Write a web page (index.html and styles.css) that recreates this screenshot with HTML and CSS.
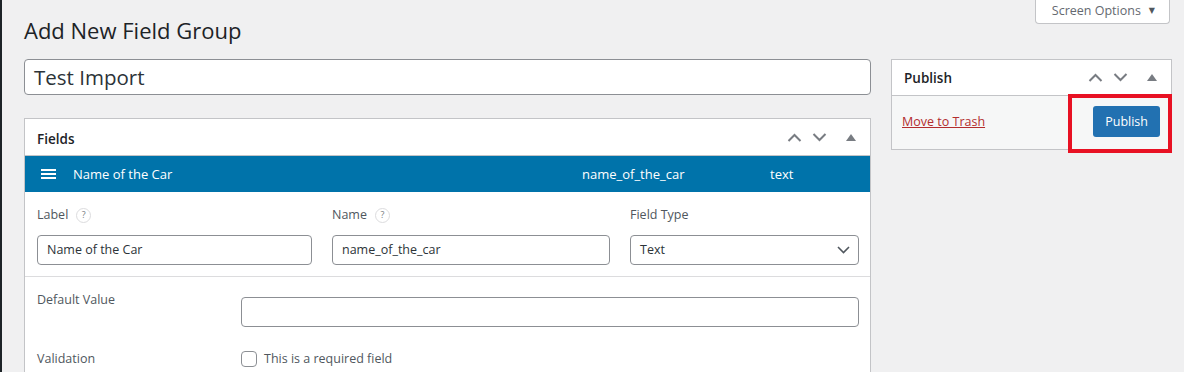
FILE: index.html
```html
<!DOCTYPE html>
<html>
<head>
    <title>Add New Field Group</title>
    <link rel="stylesheet" href="styles.css">
</head>
<body>
    <div class="admin-edge"></div>
    <div class="page-wrapper">
        <div class="top-row">
            <h1>Add New Field Group</h1>
            <button class="screen-options">Screen Options <span class="caret">&#9660;</span></button>
        </div>

        <div class="columns">
            <div class="main-col">
                <div class="title-input">Test Import</div>

                <div class="postbox fields-box">
                    <div class="postbox-header">
                        <h2>Fields</h2>
                        <div class="handle-actions">
                            <svg width="15" height="9" viewBox="0 0 15 9"><path d="M1.5 8 L7.5 2 L13.5 8" fill="none" stroke="#787c82" stroke-width="2"/></svg>
                            <svg width="15" height="9" viewBox="0 0 15 9"><path d="M1.5 1 L7.5 7 L13.5 1" fill="none" stroke="#787c82" stroke-width="2"/></svg>
                            <svg class="toggle" width="10" height="7" viewBox="0 0 10 7"><path d="M0 7 L5 0 L10 7 Z" fill="#787c82"/></svg>
                        </div>
                    </div>

                    <div class="field-handle">
                        <div class="handle-icon">
                            <span></span><span></span><span></span>
                        </div>
                        <div>Name of the Car</div>
                        <div>name_of_the_car</div>
                        <div>text</div>
                    </div>

                    <div class="field-settings">
                        <div class="settings-row three">
                            <div class="form-group">
                                <label>Label <span class="help">?</span></label>
                                <div class="text-input">Name of the Car</div>
                            </div>
                            <div class="form-group">
                                <label>Name <span class="help">?</span></label>
                                <div class="text-input">name_of_the_car</div>
                            </div>
                            <div class="form-group">
                                <label>Field Type</label>
                                <div class="text-input select">
                                    Text
                                    <svg width="13" height="8" viewBox="0 0 13 8"><path d="M1 1 L6.5 6.5 L12 1" fill="none" stroke="#50575e" stroke-width="1.6"/></svg>
                                </div>
                            </div>
                        </div>

                        <div class="settings-row split default-row">
                            <label>Default Value</label>
                            <div class="text-input"></div>
                        </div>

                        <div class="settings-row split check-row">
                            <label>Validation</label>
                            <div class="checkbox-line">
                                <span class="checkbox"></span>
                                This is a required field
                            </div>
                        </div>
                    </div>
                </div>
            </div>

            <div class="side-col">
                <div class="postbox publish-box">
                    <div class="postbox-header">
                        <h2>Publish</h2>
                        <div class="handle-actions">
                            <svg width="15" height="9" viewBox="0 0 15 9"><path d="M1.5 8 L7.5 2 L13.5 8" fill="none" stroke="#787c82" stroke-width="2"/></svg>
                            <svg width="15" height="9" viewBox="0 0 15 9"><path d="M1.5 1 L7.5 7 L13.5 1" fill="none" stroke="#787c82" stroke-width="2"/></svg>
                            <svg class="toggle" width="10" height="7" viewBox="0 0 10 7"><path d="M0 7 L5 0 L10 7 Z" fill="#787c82"/></svg>
                        </div>
                    </div>
                    <div class="publish-actions">
                        <a href="#" class="trash-link">Move to Trash</a>
                        <button class="btn-primary">Publish</button>
                    </div>
                    <div class="highlight"></div>
                </div>
            </div>
        </div>
    </div>
</body>
</html>
```

FILE: styles.css
```css
* {
    margin: 0;
    padding: 0;
    box-sizing: border-box;
    font-family: "Open Sans", "Noto Sans", sans-serif;
}

body {
    background: #f0f0f1;
    color: #1d2327;
    height: 372px;
    overflow: hidden;
    display: flex;
}

.admin-edge {
    width: 2px;
    background: #1d2327;
    flex-shrink: 0;
}

.page-wrapper {
    flex: 1;
    padding: 0 12px 0 22px;
}

.top-row {
    display: flex;
    justify-content: space-between;
    align-items: flex-start;
}

h1 {
    font-size: 22px;
    font-weight: 400;
    line-height: 30px;
    margin-top: 15px;
    color: #1d2327;
}

.screen-options {
    margin-right: 2px;
    background: #fff;
    border: 1px solid #c3c4c7;
    border-top: none;
    border-radius: 0 0 4px 4px;
    color: #646970;
    font-size: 12.5px;
    height: 24px;
    padding: 0 14px 2px 16px;
    display: flex;
    align-items: center;
    gap: 8px;
}

.caret {
    font-size: 8px;
    color: #50575e;
    font-family: "DejaVu Sans", sans-serif;
}

.columns {
    display: grid;
    grid-template-columns: 847px 281px;
    gap: 20px;
    margin-top: 14px;
}

.title-input {
    height: 36px;
    background: #fff;
    border: 1px solid #8c8f94;
    border-radius: 4px;
    font-size: 20.5px;
    line-height: 34px;
    padding: 0 9px;
    color: #2c3338;
}

.postbox {
    background: #fff;
    border: 1px solid #c3c4c7;
    position: relative;
}

.fields-box {
    margin-top: 23px;
}

.postbox-header {
    height: 37px;
    border-bottom: 1px solid #c3c4c7;
    display: flex;
    align-items: center;
    justify-content: space-between;
    padding: 0 14px 0 12px;
}

.fields-box .postbox-header h2 {
    margin-top: 3px;
}

.postbox-header h2 {
    font-size: 13.5px;
    font-weight: 600;
    color: #1d2327;
}

.handle-actions {
    display: flex;
    align-items: center;
    gap: 10px;
}

.handle-actions .toggle {
    margin-left: 9px;
}

.field-handle {
    background: #0073aa;
    color: #fff;
    height: 36px;
    display: grid;
    grid-template-columns: 48px 509px 188px 1fr;
    align-items: center;
    font-size: 13px;
    font-weight: 500;
}

.handle-icon {
    padding-left: 16px;
    display: flex;
    flex-direction: column;
    gap: 2px;
}

.handle-icon span {
    display: block;
    width: 15px;
    height: 2px;
    background: #fff;
}

.field-settings {
    padding: 14px 11px 30px 12px;
}

.settings-row.three {
    display: grid;
    grid-template-columns: 275px 278px 1fr;
    gap: 20px;
    padding-bottom: 11px;
    border-bottom: 1px solid #dcdcde;
    margin: 0 -11px 0 -12px;
    padding-left: 12px;
    padding-right: 11px;
}

.form-group label {
    display: flex;
    align-items: center;
    gap: 8px;
    font-size: 12.5px;
    color: #50575e;
    line-height: 18px;
    margin-bottom: 11px;
}

.help {
    display: inline-flex;
    align-items: center;
    justify-content: center;
    width: 15px;
    height: 15px;
    border: 1px solid #dcdcde;
    border-radius: 50%;
    font-size: 9px;
    color: #787c82;
}

.text-input {
    height: 30px;
    background: #fff;
    border: 1px solid #8c8f94;
    border-radius: 4px;
    font-size: 12.5px;
    line-height: 28px;
    padding: 0 9px;
    color: #2c3338;
}

.select {
    display: flex;
    justify-content: space-between;
    align-items: center;
    padding-right: 8px;
}

.settings-row.split {
    display: grid;
    grid-template-columns: 204px 1fr;
}

.settings-row.split label {
    font-size: 12.5px;
    color: #50575e;
    line-height: 16px;
}

.default-row {
    padding-top: 20px;
}

.default-row label {
    margin-top: -5px;
}

.check-row {
    align-items: center;
    padding-top: 23px;
}

.checkbox-line {
    display: flex;
    align-items: center;
    gap: 7px;
    font-size: 12.5px;
    color: #50575e;
}

.checkbox {
    width: 16px;
    height: 16px;
    border: 1px solid #8c8f94;
    border-radius: 4px;
    background: #fff;
}

.publish-box .postbox-header {
    height: 36px;
}

.publish-actions {
    background: #f6f7f7;
    height: 53px;
    display: flex;
    align-items: center;
    justify-content: space-between;
    padding: 0 11px 2px 10px;
}

.trash-link {
    color: #b32d2e;
    font-size: 12.5px;
    text-decoration: underline;
}

.btn-primary {
    background: #2271b1;
    color: #fff;
    border: none;
    border-radius: 3px;
    font-size: 12.5px;
    height: 31px;
    padding: 0 12px;
}

.highlight {
    position: absolute;
    left: 176px;
    top: 34px;
    width: 104px;
    height: 59px;
    border: 4px solid #e81123;
}
```
